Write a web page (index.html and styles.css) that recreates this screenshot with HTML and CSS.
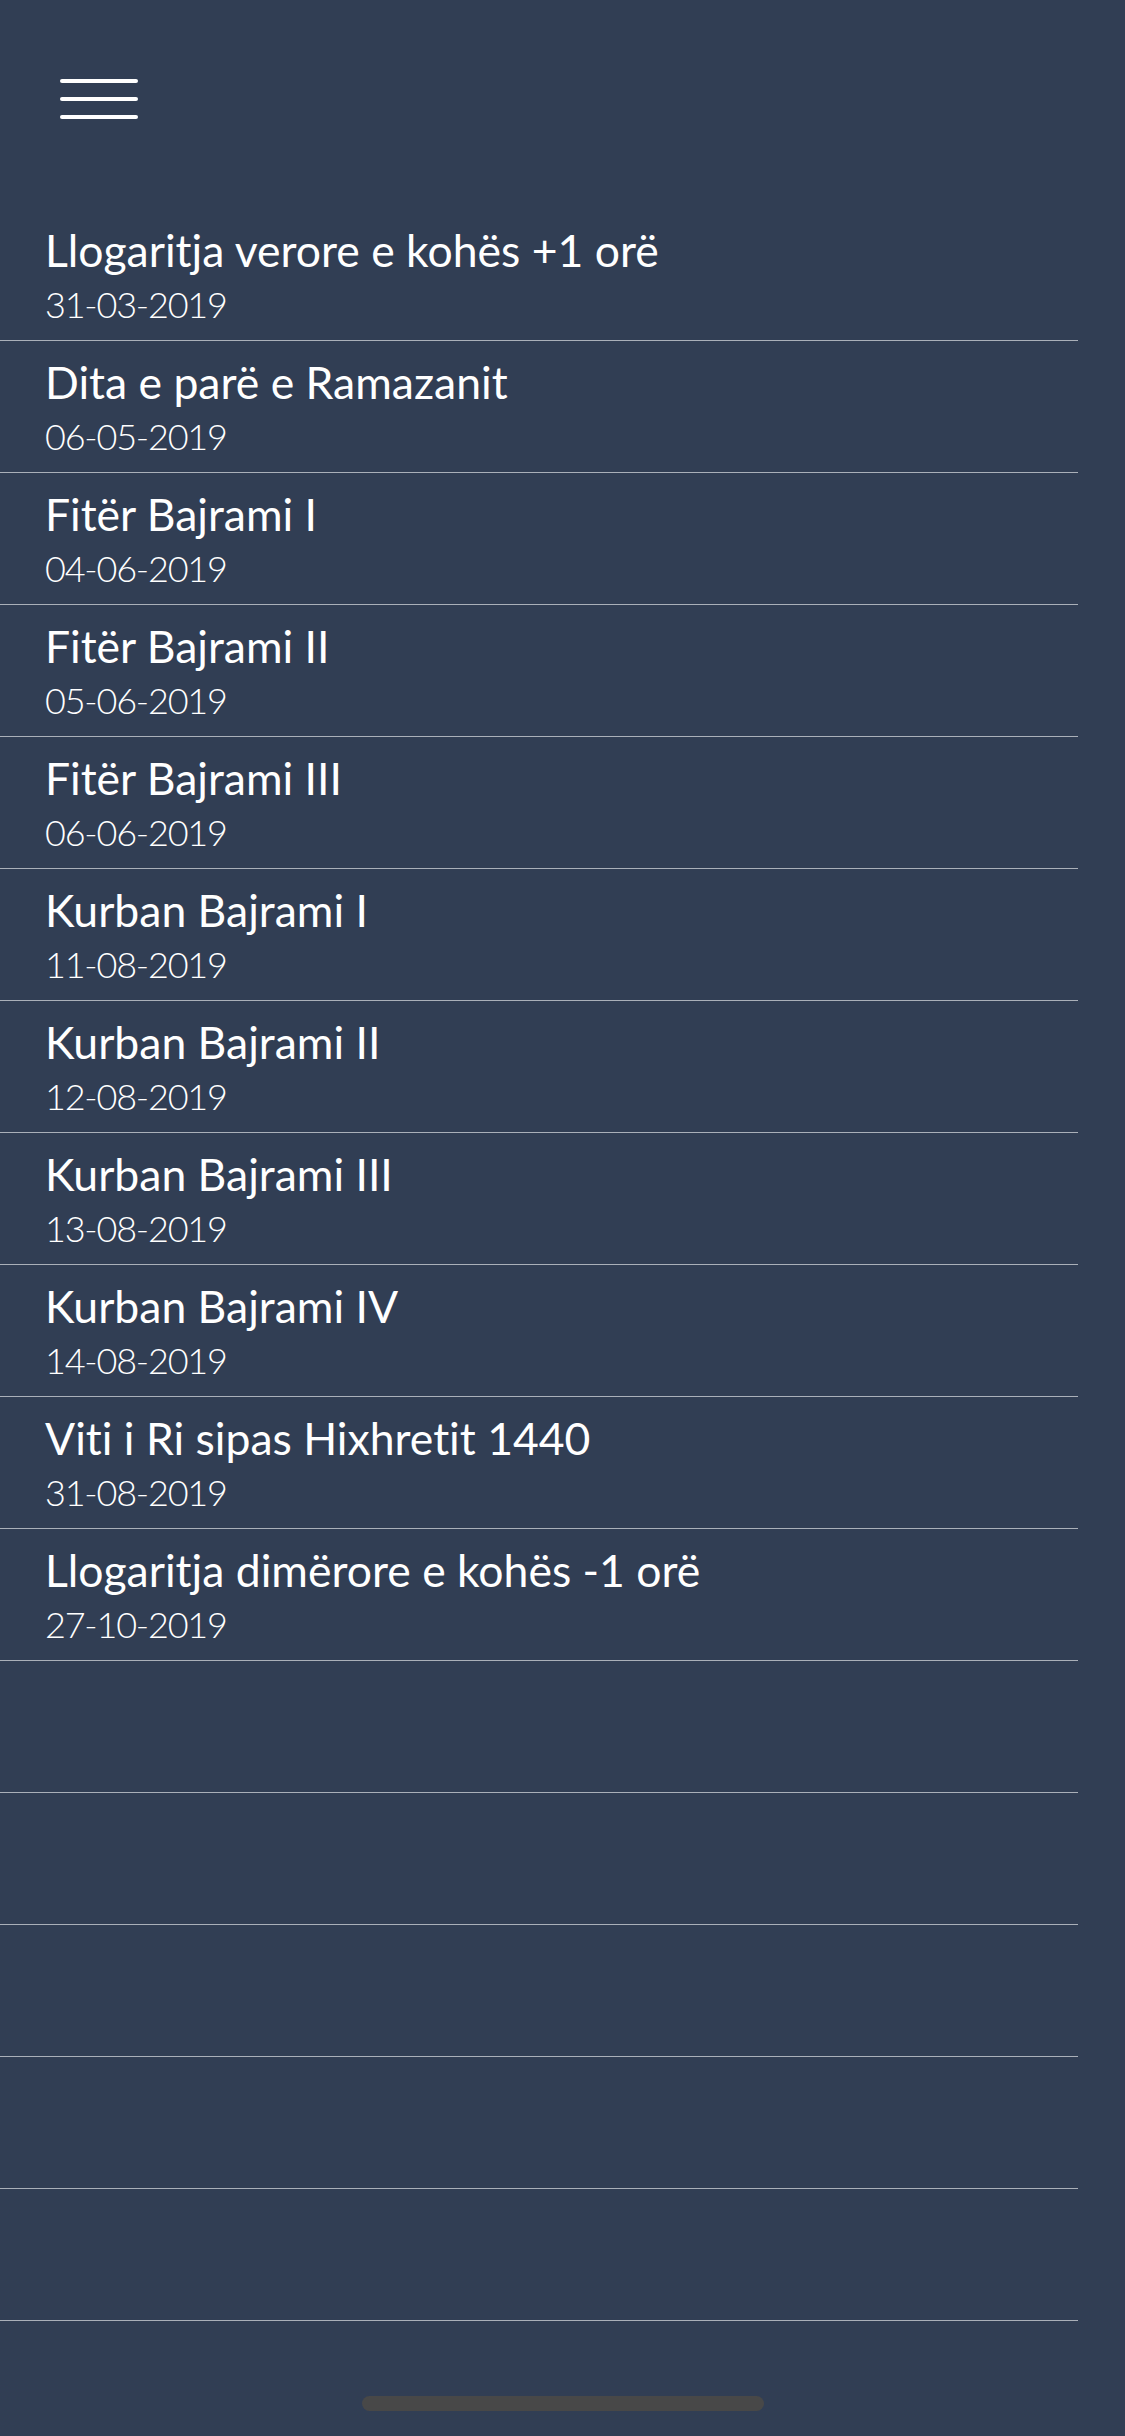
FILE: index.html
```html
<!DOCTYPE html>
<html lang="sq">
<head>
  <meta charset="UTF-8" />
  <meta name="viewport" content="width=device-width, initial-scale=1.0"/>
  <title>Festat</title>
  <link rel="stylesheet" href="styles.css">
</head>
<body>

<header class="topbar">
  <button class="menu" aria-label="Menu">
    <svg width="78" height="42" viewBox="0 0 78 42">
      <g stroke="#ffffff" stroke-width="4" stroke-linecap="round">
        <line x1="2" y1="3" x2="76" y2="3" />
        <line x1="2" y1="21" x2="76" y2="21" />
        <line x1="2" y1="39" x2="76" y2="39" />
      </g>
    </svg>
  </button>
</header>

<ul class="days">
  <li class="day"><div class="name">Llogaritja verore e kohës +1 orë</div><div class="date">31-03-2019</div></li>
  <li class="day"><div class="name">Dita e parë e Ramazanit</div><div class="date">06-05-2019</div></li>
  <li class="day"><div class="name">Fitër Bajrami I</div><div class="date">04-06-2019</div></li>
  <li class="day"><div class="name">Fitër Bajrami II</div><div class="date">05-06-2019</div></li>
  <li class="day"><div class="name">Fitër Bajrami III</div><div class="date">06-06-2019</div></li>
  <li class="day"><div class="name">Kurban Bajrami I</div><div class="date">11-08-2019</div></li>
  <li class="day"><div class="name">Kurban Bajrami II</div><div class="date">12-08-2019</div></li>
  <li class="day"><div class="name">Kurban Bajrami III</div><div class="date">13-08-2019</div></li>
  <li class="day"><div class="name">Kurban Bajrami IV</div><div class="date">14-08-2019</div></li>
  <li class="day"><div class="name">Viti i Ri sipas Hixhretit 1440</div><div class="date">31-08-2019</div></li>
  <li class="day"><div class="name">Llogaritja dimërore e kohës -1 orë</div><div class="date">27-10-2019</div></li>
  <li class="day empty"></li>
  <li class="day empty"></li>
  <li class="day empty"></li>
  <li class="day empty"></li>
  <li class="day empty"></li>
</ul>

<div class="home-bar"></div>

</body>
</html>
```

FILE: styles.css
```css
body {
  margin: 0;
  font-family: Lato, 'Open Sans', sans-serif;
  font-variant-ligatures: none;
  background: #313e54;
  color: #ffffff;
}
.topbar {
  height: 209px;
  box-sizing: border-box;
  padding: 78px 0 0 60px;
}
.menu {
  display: block;
  padding: 0;
  border: none;
  background: none;
  cursor: pointer;
}
.menu svg {
  display: block;
}
.days {
  list-style: none;
  margin: 0;
  padding: 0;
  width: 1078px;
}
.day {
  height: 132px;
  box-sizing: border-box;
  padding: 16px 0 0 45px;
  border-bottom: 1px solid #aab0b9;
}
.name {
  font-size: 44.5px;
  line-height: 50px;
  font-weight: 400;
  white-space: nowrap;
}
.date {
  margin-top: 4px;
  font-size: 36px;
  line-height: 50px;
  font-weight: 300;
  letter-spacing: -1.2px;
}
.home-bar {
  width: 402px;
  height: 15px;
  margin: 75px auto 0;
  border-radius: 8px;
  background: #484848;
}
```
